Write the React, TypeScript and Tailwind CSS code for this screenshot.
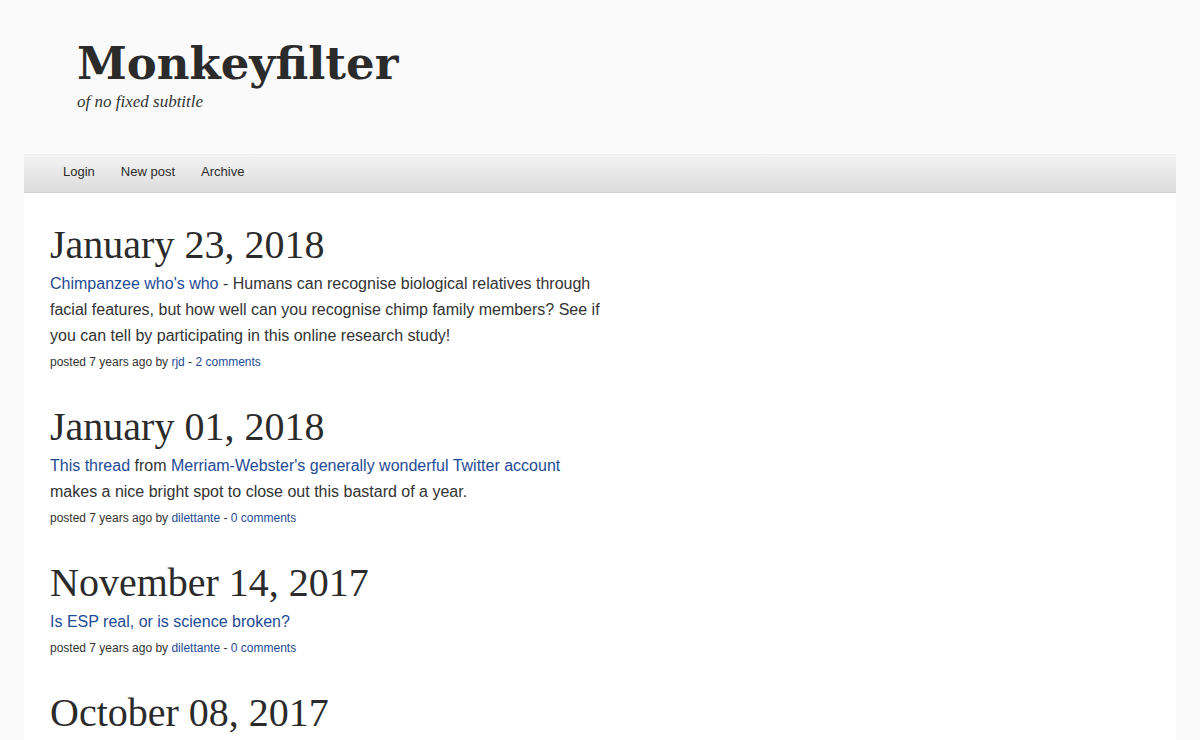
import React from "react";

interface Post {
  date: string;
  body: React.ReactNode;
  author: string;
  comments: string;
}

const link = "text-[#1e4b96] hover:underline";

const posts: Post[] = [
  {
    date: "January 23, 2018",
    body: (
      <>
        <a href="#" className={link}>
          Chimpanzee who's who
        </a>{" "}
        - Humans can recognise biological relatives through facial features,
        but how well can you recognise chimp family members? See if you can
        tell by participating in this online research study!
      </>
    ),
    author: "rjd",
    comments: "2 comments",
  },
  {
    date: "January 01, 2018",
    body: (
      <>
        <a href="#" className={link}>
          This thread
        </a>{" "}
        from{" "}
        <a href="#" className={link}>
          Merriam-Webster's generally wonderful Twitter account
        </a>{" "}
        makes a nice bright spot to close out this bastard of a year.
      </>
    ),
    author: "dilettante",
    comments: "0 comments",
  },
  {
    date: "November 14, 2017",
    body: (
      <a href="#" className={link}>
        Is ESP real, or is science broken?
      </a>
    ),
    author: "dilettante",
    comments: "0 comments",
  },
  {
    date: "October 08, 2017",
    body: (
      <a href="#" className={link}>
        The monkeys are still here.
      </a>
    ),
    author: "dilettante",
    comments: "0 comments",
  },
];

const navItems = ["Login", "New post", "Archive"];

export default function App() {
  return (
    <div className="min-h-screen bg-[#fafafa] font-['Liberation_Sans',Arial,sans-serif] text-[#333]">
      <div className="mx-[24px]">
        <header className="pl-[53px] pt-[40px] pb-[41px]">
          <h1 className="font-['DejaVu_Serif',Georgia,serif] text-[45px] font-bold leading-[48px] text-[#2b2b2b]">
            Monkeyfilter
          </h1>
          <p className="mt-[3px] font-['Liberation_Serif',Georgia,serif] text-[17px] italic leading-[22px] text-[#333]">
            of no fixed subtitle
          </p>
        </header>

        <nav className="h-[39px] border-t border-b border-t-[#ececec] border-b-[#d2d2d2] bg-gradient-to-b from-[#f3f3f3] to-[#dcdcdc] pl-[26px] flex items-start">
          {navItems.map((item) => (
            <a
              key={item}
              href="#"
              className="px-[13px] text-[13px] leading-[34px] text-[#2b2b2b] hover:text-black"
            >
              {item}
            </a>
          ))}
        </nav>

        <main className="bg-white pl-[26px] pb-10">
          {posts.map((post) => (
            <article key={post.date} className="pt-[28px]">
              <h2 className="font-['Liberation_Serif',Georgia,serif] text-[40px] leading-[48px] text-[#2b2b2b] mb-[2px]">
                {post.date}
              </h2>
              <p className="max-w-[556px] text-[16px] leading-[26px]">
                {post.body}
              </p>
              <p className="text-[12px] leading-[26px] text-[#333]">
                posted 7 years ago by{" "}
                <a href="#" className={link}>
                  {post.author}
                </a>{" "}
                -{" "}
                <a href="#" className={link}>
                  {post.comments}
                </a>
              </p>
            </article>
          ))}
        </main>
      </div>
    </div>
  );
}
